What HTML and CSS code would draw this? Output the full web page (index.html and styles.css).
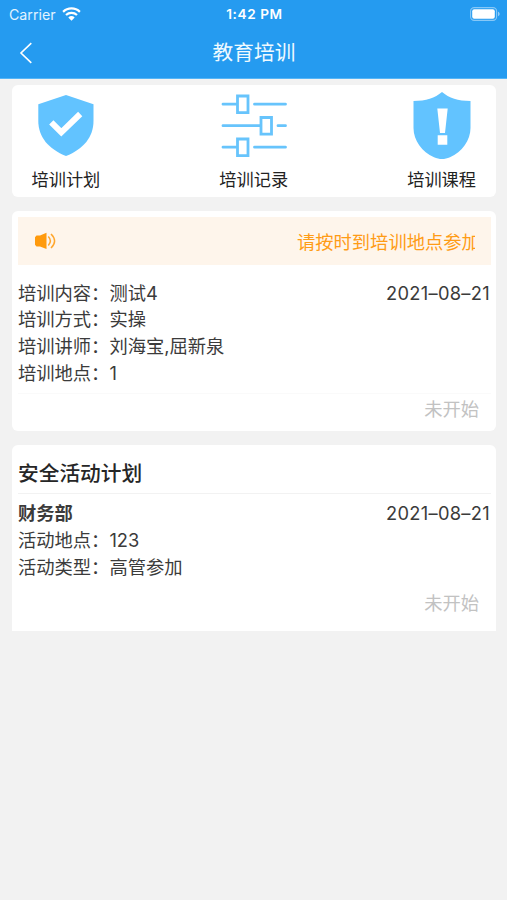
FILE: index.html
```html
<!DOCTYPE html>
<html lang="zh-CN">
<head>
<meta charset="utf-8">
<title>教育培训</title>
<link rel="stylesheet" href="styles.css">
</head>
<body>
<header class="header">
  <div class="status">
    <div class="carrier"><span>Carrier</span>
      <svg class="wifi" width="19" height="14" viewBox="0 0 19 14"><g fill="none" stroke="#fff" stroke-width="2.2"><path d="M1.1 4.9a12 12 0 0 1 16.8 0"/><path d="M4 8a8 8 0 0 1 11 0"/></g><path fill="#fff" d="M6.3 10.4a4.7 4.7 0 0 1 6.4 0L9.5 13.7z"/></svg>
    </div>
    <div class="clock">1:42 PM</div>
    <svg class="battery" width="30" height="14" viewBox="0 0 30 14"><rect x=".6" y=".6" width="26" height="12.8" rx="3.6" fill="none" stroke="#fff" stroke-opacity=".45" stroke-width="1.1"/><rect x="2.2" y="2.3" width="22.6" height="9.4" rx="2" fill="#fff"/><path d="M28 4.8c2.2.7 2.2 3.700 0 4.400z" fill="#fff" fill-opacity=".5"/></svg>
  </div>
  <div class="nav">
    <svg class="back" width="14" height="22" viewBox="0 0 14 22"><path d="M12.300 1.200 2 11l10.300 9.800" fill="none" stroke="#fff" stroke-width="1.600"/></svg>
    <h1>教育培训</h1>
    <span></span>
  </div>
</header>
<main>
  <nav class="card menu">
    <a class="item">
      <svg width="68" height="68" viewBox="0 0 68 68"><path fill="#62c3ff" d="M34 3 61.500 12.300V29C61.500 45 51.500 57 34 64 16.500 57 6.300 45 6.300 29V12.300z"/><path d="m19.300 30.400 10 10L48.200 22" fill="none" stroke="#fff" stroke-width="6"/></svg>
      <span>培训计划</span>
    </a>
    <a class="item">
      <svg width="68" height="68" viewBox="0 0 68 68"><g fill="none" stroke="#67c4fc" stroke-width="2.800"><path stroke-linecap="round" d="M3 12.200h13M34.500 12.200h31M3 33.700h37M58 33.700h7.500M3 55.200h13M34.500 55.200h31"/><path d="M17.500 4h10.500v16.600H17.500zM41 25.500h10.500v16.600H41zM17.500 47h10.500v16.600H17.500z"/></g></svg>
      <span>培训记录</span>
    </a>
    <a class="item">
      <svg width="68" height="68" viewBox="0 0 68 68"><path fill="#62c3ff" d="M34 0C41 6 50 9 62.500 9V36C62.500 48 54 60.500 42 65.200 36.500 67.600 31.500 67.600 26 65.200 14 60.500 5.500 48 5.500 36V9C18 9 27 6 34 0z"/><path fill="#fff" d="M29.300 16.500h10.400L37 41h-5zM29.700 43.200h9.600v9.600h-9.600z"/></svg>
      <span>培训课程</span>
    </a>
  </nav>
  <section class="card training">
    <div class="notice">
      <svg width="22" height="18" viewBox="0 0 22 18"><path fill="#ff9a0c" d="M0 5.200 1.500 3.500H5L11.500 .8V17L5 14.500H1.500L0 12.800z"/><path d="M13.300 4.600q4.200 4.400 0 8.800M16 2q7.200 7 0 14" fill="none" stroke="#ffa62c" stroke-width="1.500"/></svg>
      <div class="marquee"><span>请按时到培训地点参加</span></div>
    </div>
    <div class="details">
      <div class="row"><span>培训内容：测试4</span><time>2021–08–21</time></div>
      <div class="row">培训方式：实操</div>
      <div class="row">培训讲师：刘海宝,屈新泉</div>
      <div class="row">培训地点：1</div>
    </div>
    <div class="state">未开始</div>
  </section>
  <section class="card activity">
    <h2>安全活动计划</h2>
    <div class="details">
      <div class="row"><strong>财务部</strong><time>2021–08–21</time></div>
      <div class="row">活动地点：123</div>
      <div class="row">活动类型：高管参加</div>
    </div>
    <div class="state">未开始</div>
  </section>
</main>
</body>
</html>
```
FILE: styles.css
```css
* { box-sizing: border-box; }
body {
  margin: 0;
  min-height: 900px;
  background: #f2f2f2;
  color: #3b3b3b;
  font: 18.3px/27px Inter, "Noto Sans CJK SC", sans-serif;
}
h1, h2 { margin: 0; }
svg { display: block; flex: none; }
.header {
  height: 79px;
  background: #259bf0;
  border-bottom: 1px solid #55b5f7;
  color: #fff;
}
.status {
  display: grid;
  grid-template-columns: 1fr auto 1fr;
  align-items: center;
  height: 26px;
  padding: 0 7px 0 9px;
  font-size: 14.2px;
}
.carrier { display: flex; align-items: center; gap: 6px; color: #e2f3ff; }
.carrier span { padding-top: 1px; }
.clock { padding-top: 1px; font-weight: 600; font-size: 13.6px; letter-spacing: .6px; }
.battery { justify-self: end; }
.nav {
  display: grid;
  grid-template-columns: 1fr auto 1fr;
  align-items: center;
  height: 53px;
  padding: 0 18px 0 19px;
}
.nav h1 { font-size: 20.7px; font-weight: 400; line-height: 30px; color: #effaff; }
main {
  display: flex;
  flex-direction: column;
  gap: 14px;
  padding: 6px 11px 0 12px;
}
.card { background: #fff; border-radius: 6px; }
.menu {
  display: flex;
  justify-content: space-between;
  height: 112px;
  padding: 7px 20px 0 19.5px;
}
.item {
  display: flex;
  flex-direction: column;
  align-items: center;
  gap: 6px;
  color: #222;
  font-size: 17.2px;
}
.training { height: 220px; padding: 6px 5px 0 6px; }
.notice {
  display: flex;
  align-items: center;
  justify-content: space-between;
  height: 48px;
  padding: 0 16px 0 17px;
  background: #fef5eb;
  color: #ff9c16;
}
.marquee { width: 178px; padding-top: 2px; overflow: hidden; white-space: nowrap; }
.training .details { padding: 14.500px 0 6px; border-bottom: 1px solid #fafafa; }
.row { display: flex; justify-content: space-between; height: 26.900px; white-space: nowrap; }
time { margin-right: 1px; letter-spacing: .3px; }
strong { font-weight: 700; }
.state { padding-right: 12px; text-align: right; color: #c2c2c2; }
.training .state { margin-top: 1.500px; }
.activity { height: 186px; padding: 0 5px 0 6px; border-radius: 6px 6px 0 0; }
.activity h2 {
  height: 49px;
  padding-top: 15px;
  border-bottom: 1px solid #f2f2f2;
  font-size: 20.7px;
  font-weight: 500;
  color: #262626;
}
.activity .details { padding-top: 6px; }
.activity .state { margin-top: 9px; }
```
